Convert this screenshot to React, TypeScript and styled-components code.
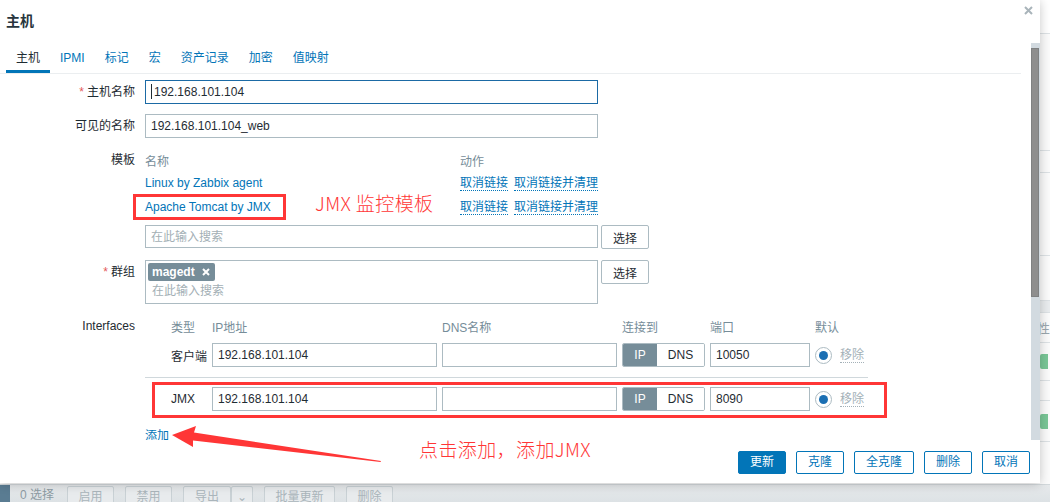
import React from "react";
import styled, { createGlobalStyle } from "styled-components";

const GlobalStyle = createGlobalStyle`
  html, body { margin: 0; padding: 0; }
  body {
    width: 1050px; height: 502px; overflow: hidden;
    background: #f4f5f6;
    font-family: "Liberation Sans", "Noto Sans CJK SC", Arial, sans-serif;
    font-size: 12px; color: #1f2c33;
  }
  * { box-sizing: border-box; }
`;

const BLUE = "#0275b8";
const BORDER = "#acbbc2";
const GREY = "#768d99";
const RED = "#ff3636";

/* ---------- background page ---------- */
const Page = styled.div`
  position: relative;
  width: 1050px;
  height: 502px;
  overflow: hidden;
  display: flex;
  flex-direction: column;
`;
const BgMain = styled.div`
  flex: 1;
  display: flex;
  flex-direction: column;
  background: #fbfbfb;
`;
const BgRow = styled.div<{ $h: number; $bg?: string }>`
  flex: none;
  height: ${(p) => p.$h}px;
  background: ${(p) => p.$bg || "#fbfbfb"};
  border-bottom: 1px solid #dde2e5;
  display: flex;
  align-items: center;
  justify-content: flex-end;
  color: #9aa7ae;
  font-size: 13px;
  overflow: hidden;
`;
const GreenBadge = styled.span`
  width: 8px;
  height: 15px;
  background: #79c696;
  border-radius: 2px 0 0 2px;
  margin-right: 2px;
`;
const BgFooter = styled.div`
  flex: none;
  height: 18px;
  display: flex;
  align-items: flex-start;
  background: linear-gradient(#e6e9eb, #dde2e5);
  border-top: 1px solid #d3d9dc;
  overflow: hidden;
`;
const BgFooterMark = styled.div`
  width: 10px;
  height: 18px;
  background: #5a7c92;
`;
const BgCount = styled.span`
  margin: 2px 13px 0 10px;
  color: #8d9ba3;
  font-size: 12px;
  line-height: 16px;
`;
const BgBtn = styled.span<{ $w: number; $ml?: number }>`
  width: ${(p) => p.$w}px;
  margin-left: ${(p) => p.$ml ?? 11}px;
  height: 22px;
  margin-top: 1px;
  border: 1px solid #c9d1d5;
  border-radius: 2px;
  background: #e8ebed;
  color: #aab5bb;
  text-align: center;
  line-height: 20px;
  font-size: 12px;
`;

/* ---------- modal ---------- */
const Modal = styled.div`
  position: absolute;
  left: 0;
  top: 0;
  width: 1040px;
  height: 483px;
  background: #fff;
  box-shadow: 0 1px 10px rgba(0, 0, 0, 0.22);
  display: flex;
  flex-direction: column;
`;
const ModalHead = styled.div`
  position: relative;
  height: 43px;
  flex: none;
  padding: 13px 0 0 6px;
`;
const Title = styled.h4`
  margin: 0;
  font-size: 14px;
  line-height: 16px;
  font-weight: bold;
  color: #27353d;
`;
const CloseBtn = styled.span`
  position: absolute;
  right: 7px;
  top: 6px;
  width: 9px;
  height: 9px;
  display: flex;
`;
const ModalBody = styled.div`
  height: 397px;
  flex: none;
  display: flex;
`;
const Content = styled.div`
  width: 1021px;
  overflow: hidden;
`;
const ScrollTrack = styled.div`
  width: 9px;
  margin-left: 10px;
  background: #d2dae0;
  padding-top: 5px;
`;
const ScrollThumb = styled.div`
  width: 8px;
  height: 249px;
  background: #8e8e8e;
  border: 1px solid #7f8182;
`;
const ModalFoot = styled.div`
  flex: 1;
  display: flex;
  justify-content: flex-end;
  align-items: flex-start;
  gap: 10px;
  padding: 11px 10px 0 0;
`;
const Btn = styled.button<{ $primary?: boolean }>`
  height: 23px;
  padding: 0 11px;
  min-width: 48px;
  border: 1px solid ${BLUE};
  border-radius: 2px;
  background: ${(p) => (p.$primary ? BLUE : "#fff")};
  color: ${(p) => (p.$primary ? "#fff" : BLUE)};
  font: inherit;
  font-size: 12px;
  line-height: 21px;
`;

/* tabs */
const TabList = styled.div`
  display: flex;
  height: 31px;
  padding-left: 6px;
  border-bottom: 1px solid #ebeef0;
`;
const Tab = styled.div<{ $active?: boolean }>`
  height: 30px;
  padding: 2px 10px 0;
  line-height: 27px;
  border-bottom: 3px solid ${(p) => (p.$active ? BLUE : "transparent")};
  color: ${(p) => (p.$active ? "#1f2c33" : BLUE)};
  white-space: nowrap;
`;

/* form */
const Form = styled.div`
  display: flex;
  flex-direction: column;
  padding-top: 6px;
`;
const Row = styled.div<{ $mt?: number }>`
  display: flex;
  align-items: flex-start;
  margin-top: ${(p) => p.$mt ?? 0}px;
`;
const Label = styled.div<{ $lh?: number }>`
  width: 135px;
  margin-right: 10px;
  flex: none;
  text-align: right;
  line-height: ${(p) => p.$lh ?? 24}px;
  white-space: nowrap;
`;
const Star = styled.span`
  color: #e45959;
  margin-right: 3px;
`;
const InputWrap = styled.div`
  position: relative;
  display: flex;
`;
const TextInput = styled.input<{ $w: number; $focus?: boolean; $pl?: number; $h?: number }>`
  width: ${(p) => p.$w}px;
  height: ${(p) => p.$h ?? 24}px;
  border: 1px solid ${(p) => (p.$focus ? "#1b6aa5" : BORDER)};
  border-radius: 0;
  padding: 0 5px 0 ${(p) => p.$pl ?? 5}px;
  font: inherit;
  font-size: 12px;
  color: #1f2c33;
  background: #fff;
  outline: none;
  &::placeholder { color: #a3afb5; }
`;
const Caret = styled.span`
  position: absolute;
  left: 6px;
  top: 4px;
  width: 1px;
  height: 15px;
  background: #1f2c33;
`;
const Field = styled.div`
  display: flex;
  flex-direction: column;
`;
const FieldLine = styled.div<{ $mt?: number }>`
  display: flex;
  gap: 3px;
  align-items: flex-start;
  margin-top: ${(p) => p.$mt ?? 0}px;
`;
const SelectBtn = styled.button`
  height: 24px;
  padding: 0 11px;
  border: 1px solid ${BORDER};
  border-radius: 2px;
  background: #fff;
  color: #1f2c33;
  font: inherit;
  font-size: 12px;
`;

/* templates */
const TplTable = styled.div`
  display: grid;
  grid-template-columns: 315px auto;
  grid-template-rows: 21px 24px 24px;
  align-items: center;
`;
const HeadCell = styled.div`
  color: ${GREY};
  white-space: nowrap;
`;
const Link = styled.span`
  color: ${BLUE};
  white-space: nowrap;
`;
const Actions = styled.div`
  display: flex;
  gap: 6px;
`;
const DottedLink = styled.span<{ $muted?: boolean }>`
  color: ${(p) => (p.$muted ? "#a4b1b8" : BLUE)};
  border-bottom: 1px dotted ${(p) => (p.$muted ? "#a4b1b8" : BLUE)};
  line-height: 14px;
  white-space: nowrap;
`;

/* groups */
const MultiSelect = styled.div`
  width: 453px;
  height: 44px;
  border: 1px solid ${BORDER};
  padding: 2px;
  display: flex;
  flex-direction: column;
  align-items: flex-start;
`;
const Tag = styled.span`
  height: 18px;
  display: inline-flex;
  align-items: center;
  gap: 7px;
  padding: 0 5px 0 4px;
  background: ${GREY};
  color: #fff;
  font-weight: bold;
  border-radius: 2px;
`;
const Placeholder = styled.span`
  margin-top: 2px;
  padding-left: 4px;
  line-height: 16px;
  color: #a3afb5;
`;

/* interfaces */
const IfWrap = styled.div`
  display: flex;
  flex-direction: column;
  align-items: flex-start;
`;
const IfGrid = styled.div<{ $h: number; $mt?: number }>`
  display: grid;
  grid-template-columns: 62px 225px 175px 83px 100px 20px auto;
  column-gap: 5px;
  height: ${(p) => p.$h}px;
  margin-top: ${(p) => p.$mt ?? 0}px;
  align-items: center;
`;
const TypeCell = styled.div<{ $head?: boolean }>`
  padding-left: 26px;
  color: ${(p) => (p.$head ? GREY : "#1f2c33")};
  white-space: nowrap;
`;
const Toggle = styled.div`
  display: flex;
  height: 24px;
  border: 1px solid ${BORDER};
  border-radius: 2px;
  overflow: hidden;
`;
const ToggleSeg = styled.span<{ $on?: boolean }>`
  width: ${(p) => (p.$on ? "34px" : "auto")};
  flex: ${(p) => (p.$on ? "none" : "1")};
  background: ${(p) => (p.$on ? GREY : "#fff")};
  color: ${(p) => (p.$on ? "#fff" : "#1f2c33")};
  text-align: center;
  line-height: 22px;
`;
const Radio = styled.span`
  width: 17px;
  height: 17px;
  border-radius: 50%;
  border: 1px solid ${BORDER};
  display: flex;
  align-items: center;
  justify-content: center;
  &::after {
    content: "";
    width: 9px;
    height: 9px;
    border-radius: 50%;
    background: #1b6fb3;
  }
`;
const Separator = styled.div`
  width: 723px;
  height: 1px;
  background: #d0d8dc;
  margin: 10px 0 9px;
`;
const AddLink = styled.span`
  margin-top: 18px;
  color: ${BLUE};
  line-height: 14px;
`;

/* annotations (overlay) */
const AnnotBox = styled.div<{ $x: number; $y: number; $w: number; $h: number }>`
  position: absolute;
  left: ${(p) => p.$x}px;
  top: ${(p) => p.$y}px;
  width: ${(p) => p.$w}px;
  height: ${(p) => p.$h}px;
  border: 3px solid ${RED};
  pointer-events: none;
`;
const AnnotText = styled.div<{ $x: number; $y: number }>`
  position: absolute;
  left: ${(p) => p.$x}px;
  top: ${(p) => p.$y}px;
  color: ${RED};
  font-family: "Noto Sans CJK SC", "Liberation Sans", sans-serif;
  font-size: 19px;
  font-weight: 300;
  letter-spacing: 0.4px;
  line-height: 20px;
  white-space: nowrap;
`;
const ArrowSvg = styled.svg`
  position: absolute;
  left: 0;
  top: 0;
  pointer-events: none;
`;

const tabs = ["主机", "IPMI", "标记", "宏", "资产记录", "加密", "值映射"];

function IfRowView({ type, port, mt }: { type: string; port: string; mt?: number }) {
  return (
    <IfGrid $h={24} $mt={mt}>
      <TypeCell>{type}</TypeCell>
      <TextInput $w={225} readOnly value="192.168.101.104" />
      <TextInput $w={175} readOnly value="" />
      <Toggle>
        <ToggleSeg $on>IP</ToggleSeg>
        <ToggleSeg>DNS</ToggleSeg>
      </Toggle>
      <TextInput $w={100} readOnly value={port} />
      <Radio />
      <DottedLink $muted>移除</DottedLink>
    </IfGrid>
  );
}

export default function App() {
  return (
    <Page>
      <GlobalStyle />
      <BgMain>
        <BgRow $h={34} $bg="#ffffff" />
        <BgRow $h={117} />
        <BgRow $h={22} />
        <BgRow $h={83} />
        <BgRow $h={45} />
        <BgRow $h={12} $bg="#e9ecee" />
        <BgRow $h={30}>性</BgRow>
        <BgRow $h={38}>
          <GreenBadge />
        </BgRow>
        <BgRow $h={20} />
        <BgRow $h={41}>
          <GreenBadge />
        </BgRow>
      </BgMain>
      <BgFooter>
        <BgFooterMark />
        <BgCount>0 选择</BgCount>
        <BgBtn $w={47} $ml={0}>启用</BgBtn>
        <BgBtn $w={47}>禁用</BgBtn>
        <BgBtn $w={48}>导出</BgBtn>
        <BgBtn $w={22} $ml={0}>⌄</BgBtn>
        <BgBtn $w={71}>批量更新</BgBtn>
        <BgBtn $w={47}>删除</BgBtn>
      </BgFooter>

      <Modal>
        <ModalHead>
          <Title>主机</Title>
          <CloseBtn>
            <svg width="9" height="9" viewBox="0 0 9 9">
              <path d="M1 1L8 8M8 1L1 8" stroke="#a9b4ba" strokeWidth="2" />
            </svg>
          </CloseBtn>
        </ModalHead>
        <ModalBody>
          <Content>
            <TabList>
              {tabs.map((t, i) => (
                <Tab key={t} $active={i === 0}>
                  {t}
                </Tab>
              ))}
            </TabList>
            <Form>
              <Row>
                <Label>
                  <Star>*</Star>主机名称
                </Label>
                <InputWrap>
                  <TextInput $w={453} $focus $pl={8} readOnly value="192.168.101.104" />
                  <Caret />
                </InputWrap>
              </Row>
              <Row $mt={10}>
                <Label>可见的名称</Label>
                <TextInput $w={453} readOnly value="192.168.101.104_web" />
              </Row>
              <Row $mt={12}>
                <Label $lh={21}>模板</Label>
                <Field>
                  <TplTable>
                    <HeadCell>名称</HeadCell>
                    <HeadCell>动作</HeadCell>
                    <Link>Linux by Zabbix agent</Link>
                    <Actions>
                      <DottedLink>取消链接</DottedLink>
                      <DottedLink>取消链接并清理</DottedLink>
                    </Actions>
                    <Link>Apache Tomcat by JMX</Link>
                    <Actions>
                      <DottedLink>取消链接</DottedLink>
                      <DottedLink>取消链接并清理</DottedLink>
                    </Actions>
                  </TplTable>
                  <FieldLine $mt={6}>
                    <TextInput $w={453} $h={23} readOnly placeholder="在此输入搜索" />
                    <SelectBtn>选择</SelectBtn>
                  </FieldLine>
                </Field>
              </Row>
              <Row $mt={11}>
                <Label>
                  <Star>*</Star>群组
                </Label>
                <FieldLine>
                  <MultiSelect>
                    <Tag>
                      magedt
                      <svg width="8" height="8" viewBox="0 0 8 8">
                        <path d="M1 1L7 7M7 1L1 7" stroke="#fff" strokeWidth="2" />
                      </svg>
                    </Tag>
                    <Placeholder>在此输入搜索</Placeholder>
                  </MultiSelect>
                  <SelectBtn>选择</SelectBtn>
                </FieldLine>
              </Row>
              <Row $mt={12}>
                <Label $lh={20}>Interfaces</Label>
                <IfWrap>
                  <IfGrid $h={20}>
                    <TypeCell $head>类型</TypeCell>
                    <HeadCell>IP地址</HeadCell>
                    <HeadCell>DNS名称</HeadCell>
                    <HeadCell>连接到</HeadCell>
                    <HeadCell>端口</HeadCell>
                    <HeadCell>默认</HeadCell>
                    <span />
                  </IfGrid>
                  <IfRowView type="客户端" port="10050" mt={7} />
                  <Separator />
                  <IfRowView type="JMX" port="8090" />
                  <AddLink>添加</AddLink>
                </IfWrap>
              </Row>
            </Form>
          </Content>
          <ScrollTrack>
            <ScrollThumb />
          </ScrollTrack>
        </ModalBody>
        <ModalFoot>
          <Btn $primary>更新</Btn>
          <Btn>克隆</Btn>
          <Btn>全克隆</Btn>
          <Btn>删除</Btn>
          <Btn>取消</Btn>
        </ModalFoot>
      </Modal>

      <AnnotBox $x={133} $y={194} $w={153} $h={26} />
      <AnnotText $x={315} $y={193}>JMX 监控模板</AnnotText>
      <AnnotBox $x={152} $y={382} $w={735} $h={36} />
      <AnnotText $x={419} $y={439}>点击添加，添加JMX</AnnotText>
      <ArrowSvg width="1050" height="502" viewBox="0 0 1050 502">
        <polygon
          points="172,435 196,426 194,432.5 381,461 380.5,462 193,440.5 193,447"
          fill={RED}
        />
      </ArrowSvg>
    </Page>
  );
}
